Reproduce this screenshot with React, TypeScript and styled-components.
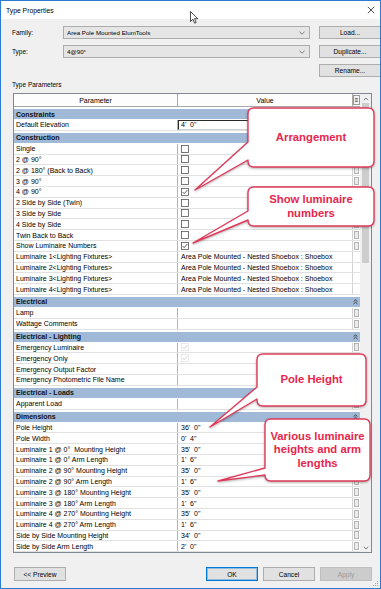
import React from 'react'
import styled, { createGlobalStyle } from 'styled-components'

const GlobalStyle = createGlobalStyle`
  html, body {
    margin: 0;
    padding: 0;
    background: #fff;
  }
  body {
    font-family: "Liberation Sans", Arial, sans-serif;
    font-size: 7px;
    color: #000;
  }
  * {
    box-sizing: border-box;
  }
`

const Window = styled.div`
  position: relative;
  width: 381px;
  height: 589px;
  border: 1px solid #2b7bd3;
  background: #f0f0f0;
  display: flex;
  flex-direction: column;
  overflow: hidden;
`

const TitleBar = styled.div`
  height: 18px;
  flex-shrink: 0;
  background: #fff;
  display: flex;
  align-items: center;
  justify-content: space-between;
  padding: 0 5px 0 5px;
`

const Title = styled.span`
  font-size: 6.8px;
`

const Body = styled.div`
  flex: 1;
  display: flex;
  flex-direction: column;
  padding: 7px 8px 0 11px;
`

const FormGrid = styled.div`
  display: grid;
  grid-template-columns: 42px 247px 62px;
  grid-auto-rows: 13px;
  column-gap: 9px;
  row-gap: 6px;
`

const Label = styled.div`
  font-size: 6.5px;
  display: flex;
  align-items: center;
`

const Combo = styled.div`
  background: #e5e5e5;
  border: 1px solid #acacac;
  display: flex;
  align-items: center;
  justify-content: space-between;
  padding: 0 4px 0 3px;
  font-size: 6.2px;
`

const Button = styled.div<{ $primary?: boolean; $disabled?: boolean }>`
  background: ${(p) => (p.$disabled ? '#cccccc' : '#e1e1e1')};
  border: 1px solid ${(p) => (p.$primary ? '#0078d7' : p.$disabled ? '#bfbfbf' : '#adadad')};
  box-shadow: ${(p) => (p.$primary ? 'inset 0 0 0 1px rgba(0,120,215,0.35)' : 'none')};
  color: ${(p) => (p.$disabled ? '#9a9a9a' : '#000')};
  font-size: 6.6px;
  display: flex;
  align-items: center;
  justify-content: center;
`

const RenameButton = styled(Button)`
  grid-column: 3;
`

const SectionLabel = styled.div`
  margin-top: 4px;
  height: 8px;
  line-height: 8px;
  font-size: 6.5px;
`

const Table = styled.div`
  margin: 4px 0 0 1px;
  height: 460px;
  flex-shrink: 0;
  border: 1px solid #828790;
  background: #fff;
  display: flex;
`

const Grid = styled.div`
  flex: 1;
  overflow: hidden;
  display: flex;
  flex-direction: column;
`

const HeaderRow = styled.div`
  height: 13px;
  flex-shrink: 0;
  display: grid;
  grid-template-columns: 164px 175px 7px;
  border-bottom: 1px solid #a9a9a9;
  background: #fdfdfd;
`

const HeaderCell = styled.div`
  display: flex;
  align-items: center;
  justify-content: center;
  border-right: 1px solid #a9a9a9;
`

const MenuButton = styled.div`
  margin: 1px 0;
  border: 1px solid #9a9a9a;
  background: #f4f4f4;
  font-size: 6px;
  display: flex;
  align-items: center;
  justify-content: center;
  line-height: 1;
`

const Row = styled.div`
  height: 10.8px;
  flex-shrink: 0;
  display: grid;
  grid-template-columns: 164px 175px 7px;
  border-bottom: 1px solid #e1e1e1;
`

const ParamCell = styled.div`
  padding-left: 2px;
  border-right: 1px solid #b4b4b4;
  display: flex;
  align-items: center;
  white-space: pre;
  overflow: hidden;
`

const ValueCell = styled.div<{ $flush?: boolean }>`
  padding-left: ${(p) => (p.$flush ? 0 : 3)}px;
  border-right: 1px solid #d4d4d4;
  display: flex;
  align-items: center;
  white-space: pre;
  overflow: hidden;
`

const EditBox = styled.div`
  flex: 1;
  align-self: stretch;
  border: 1px solid;
  border-color: #2a2a2a #d0d0d0 #d0d0d0 #2a2a2a;
  padding-left: 2px;
  display: flex;
  align-items: center;
  white-space: pre;
`

const SideCell = styled.div`
  display: flex;
  align-items: center;
  justify-content: center;
`

const MiniBox = styled.div`
  width: 5px;
  height: 8px;
  border: 1px solid #b3b3b3;
  background: #ececec;
`

const GroupRow = styled.div`
  height: 13px;
  flex-shrink: 0;
  padding: 2px 0 1px;
  background: #fff;
`

const GroupBand = styled.div`
  height: 10px;
  background: #9fb9d7;
  display: flex;
  align-items: center;
  justify-content: space-between;
  padding: 0 2px 0 2px;
  font-weight: bold;
  color: #111;
`

const ScrollBar = styled.div`
  width: 11px;
  flex-shrink: 0;
  background: #f0f0f0;
  display: flex;
  flex-direction: column;
`

const ScrollArrow = styled.div`
  height: 9px;
  flex-shrink: 0;
  display: flex;
  align-items: center;
  justify-content: center;
`

const ScrollThumb = styled.div`
  height: 160px;
  margin: 0 2px;
  background: #cdcdcd;
`

const ScrollTrack = styled.div`
  flex: 1;
`

const Footer = styled.div`
  margin-top: 14px;
  height: 14px;
  display: flex;
  justify-content: space-between;
  padding-left: 2px;
`

const FooterGroup = styled.div`
  display: flex;
  gap: 5px;
`

const FooterButton = styled(Button)`
  width: 52px;
`

const CalloutWrap = styled.div<{ $x: number; $y: number; $w: number; $h: number }>`
  position: absolute;
  left: ${(p) => p.$x}px;
  top: ${(p) => p.$y}px;
  width: ${(p) => p.$w}px;
  height: ${(p) => p.$h}px;
  display: flex;
  align-items: center;
  justify-content: center;
  text-align: center;
  color: #e8264c;
  font-weight: bold;
  font-size: 11.3px;
  line-height: 13.5px;
`

const CalloutShape = styled.svg`
  position: absolute;
  left: 0;
  top: 0;
  overflow: visible;
  filter: drop-shadow(0.6px 1px 0.8px rgba(0, 0, 0, 0.3));

  path {
    fill: #fff;
    stroke: #e03a5a;
    stroke-width: 1.4;
    stroke-linejoin: round;
  }
`

const CalloutText = styled.span`
  position: relative;
`

const Cursor = styled.svg`
  position: absolute;
  left: 189px;
  top: 10px;
`

const Grip = styled.svg`
  position: absolute;
  right: 1px;
  bottom: 1px;
`

type Param = {
  kind: 'param'
  label: string
  value?: string
  check?: boolean
  checked?: boolean
  disabled?: boolean
  edit?: boolean
  noBox?: boolean
}
type Group = { kind: 'group'; label: string }
type Entry = Param | Group

const g = (label: string): Group => ({ kind: 'group', label })
const p = (label: string, extra: Partial<Param> = {}): Param => ({ kind: 'param', label, ...extra })

const rows: Entry[] = [
  g('Constraints'),
  p('Default Elevation', { value: '4\'  0"', edit: true }),
  g('Construction'),
  p('Single', { check: true }),
  p('2 @ 90°', { check: true }),
  p('2 @ 180° (Back to Back)', { check: true }),
  p('3 @ 90°', { check: true }),
  p('4 @ 90°', { check: true, checked: true }),
  p('2 Side by Side (Twin)', { check: true }),
  p('3 Side by Side', { check: true }),
  p('4 Side by Side', { check: true }),
  p('Twin Back to Back', { check: true }),
  p('Show Luminaire Numbers', { check: true, checked: true }),
  p('Luminaire 1<Lighting Fixtures>', { value: 'Area Pole Mounted - Nested Shoebox : Shoebox', noBox: true }),
  p('Luminaire 2<Lighting Fixtures>', { value: 'Area Pole Mounted - Nested Shoebox : Shoebox', noBox: true }),
  p('Luminaire 3<Lighting Fixtures>', { value: 'Area Pole Mounted - Nested Shoebox : Shoebox', noBox: true }),
  p('Luminaire 4<Lighting Fixtures>', { value: 'Area Pole Mounted - Nested Shoebox : Shoebox', noBox: true }),
  g('Electrical'),
  p('Lamp'),
  p('Wattage Comments'),
  g('Electrical - Lighting'),
  p('Emergency Luminaire', { check: true, checked: true, disabled: true }),
  p('Emergency Only', { check: true, checked: true, disabled: true }),
  p('Emergency Output Factor'),
  p('Emergency Photometric File Name'),
  g('Electrical - Loads'),
  p('Apparent Load'),
  g('Dimensions'),
  p('Pole Height', { value: '36\'  0"' }),
  p('Pole Width', { value: '0\'  4"' }),
  p('Luminaire 1 @ 0°  Mounting Height', { value: '35\'  0"' }),
  p('Luminaire 1 @ 0° Arm Length', { value: '1\'  6"' }),
  p('Luminaire 2 @ 90° Mounting Height', { value: '35\'  0"' }),
  p('Luminaire 2 @ 90° Arm Length', { value: '1\'  6"' }),
  p('Luminaire 3 @ 180° Mounting Height', { value: '35\'  0"' }),
  p('Luminaire 3 @ 180° Arm Length', { value: '1\'  6"' }),
  p('Luminaire 4 @ 270° Mounting Height', { value: '35\'  0"' }),
  p('Luminaire 4 @ 270° Arm Length', { value: '1\'  6"' }),
  p('Side by Side Mounting Height', { value: '34\'  0"' }),
  p('Side by Side Arm Length', { value: '2\'  0"' }),
]

function CloseIcon() {
  return (
    <svg width="8" height="8" viewBox="0 0 8 8">
      <path d="M0.8 0.8 L7.2 7.2 M7.2 0.8 L0.8 7.2" stroke="#222" strokeWidth="0.8" />
    </svg>
  )
}

function ComboChevron() {
  return (
    <svg width="6" height="4" viewBox="0 0 6 4">
      <path d="M0.5 0.8 L3 3.2 L5.5 0.8" stroke="#555" strokeWidth="0.7" fill="none" />
    </svg>
  )
}

function Checkbox({ checked, disabled }: { checked?: boolean; disabled?: boolean }) {
  const line = disabled ? '#c4c4c4' : '#3a3a3a'
  return (
    <svg width="8" height="8" viewBox="0 0 8 8">
      <rect x="0.5" y="0.5" width="7" height="7" fill="#fff" stroke={disabled ? '#e4e4e4' : '#555'} strokeWidth="0.8" />
      {checked && <path d="M1.6 4 L3.2 5.7 L6.4 2" stroke={line} strokeWidth="0.8" fill="none" />}
    </svg>
  )
}

function Collapse() {
  return (
    <svg width="5" height="6" viewBox="0 0 5 6">
      <path d="M0.6 2.6 L2.5 0.8 L4.4 2.6 M0.6 5 L2.5 3.2 L4.4 5" stroke="#222" strokeWidth="0.8" fill="none" />
    </svg>
  )
}

function Arrow({ up }: { up?: boolean }) {
  return (
    <svg width="6" height="4" viewBox="0 0 6 4">
      <path d={up ? 'M0.8 3.2 L3 1 L5.2 3.2' : 'M0.8 0.8 L3 3 L5.2 0.8'} stroke="#606060" strokeWidth="0.8" fill="none" />
    </svg>
  )
}

type CalloutProps = {
  x: number
  y: number
  w: number
  h: number
  y1: number
  y2: number
  tx: number
  ty: number
  children: React.ReactNode
}

function Callout({ x, y, w, h, y1, y2, tx, ty, children }: CalloutProps) {
  const r = 6
  const d = `M${r},0 H${w - r} Q${w},0 ${w},${r} V${h - r} Q${w},${h} ${w - r},${h} H${r} Q0,${h} 0,${h - r} V${y2} L${tx},${ty} L0,${y1} V${r} Q0,0 ${r},0 Z`
  return (
    <CalloutWrap $x={x - 1} $y={y - 1} $w={w} $h={h}>
      <CalloutShape width={w} height={h} viewBox={`0 0 ${w} ${h}`}>
        <path d={d} />
      </CalloutShape>
      <CalloutText>{children}</CalloutText>
    </CalloutWrap>
  )
}

function ParamRow({ row }: { row: Param }) {
  return (
    <Row>
      <ParamCell>{row.label}</ParamCell>
      <ValueCell $flush={row.edit}>
        {row.edit ? (
          <EditBox>{row.value}</EditBox>
        ) : row.check ? (
          <Checkbox checked={row.checked} disabled={row.disabled} />
        ) : (
          row.value
        )}
      </ValueCell>
      <SideCell>{!row.noBox && <MiniBox />}</SideCell>
    </Row>
  )
}

export default function App() {
  return (
    <>
      <GlobalStyle />
      <Window>
        <TitleBar>
          <Title>Type Properties</Title>
          <CloseIcon />
        </TitleBar>
        <Body>
          <FormGrid>
            <Label>Family:</Label>
            <Combo>
              <span>Area Pole Mounted ElumTools</span>
              <ComboChevron />
            </Combo>
            <Button>Load...</Button>
            <Label>Type:</Label>
            <Combo>
              <span>4@90°</span>
              <ComboChevron />
            </Combo>
            <Button>Duplicate...</Button>
            <RenameButton>Rename...</RenameButton>
          </FormGrid>
          <SectionLabel>Type Parameters</SectionLabel>
          <Table>
            <Grid>
              <HeaderRow>
                <HeaderCell>Parameter</HeaderCell>
                <HeaderCell>Value</HeaderCell>
                <MenuButton>≡</MenuButton>
              </HeaderRow>
              {rows.map((row, i) =>
                row.kind === 'group' ? (
                  <GroupRow key={i}>
                    <GroupBand>
                      <span>{row.label}</span>
                      <Collapse />
                    </GroupBand>
                  </GroupRow>
                ) : (
                  <ParamRow key={i} row={row} />
                )
              )}
            </Grid>
            <ScrollBar>
              <ScrollArrow>
                <Arrow up />
              </ScrollArrow>
              <ScrollThumb />
              <ScrollTrack />
              <ScrollArrow>
                <Arrow />
              </ScrollArrow>
            </ScrollBar>
          </Table>
          <Footer>
            <FooterButton>&lt;&lt; Preview</FooterButton>
            <FooterGroup>
              <FooterButton $primary>OK</FooterButton>
              <FooterButton>Cancel</FooterButton>
              <FooterButton $disabled>Apply</FooterButton>
            </FooterGroup>
          </Footer>
        </Body>

        <Cursor width="9" height="13" viewBox="0 0 9 13">
          <path d="M0.5 0.5 L0.5 10.5 L2.9 8.3 L4.6 12.2 L6.2 11.5 L4.5 7.7 L7.8 7.7 Z" fill="#fff" stroke="#000" strokeWidth="0.7" />
        </Cursor>

        <Callout x={248} y={108} w={126} h={59} y1={34} y2={52} tx={-53} ty={82}>
          Arrangement
        </Callout>
        <Callout x={248} y={187} w={126} h={39} y1={24} y2={33} tx={-55} ty={56}>
          Show luminaire
          <br />
          numbers
        </Callout>
        <Callout x={257} y={354} w={109} h={52} y1={33} y2={45} tx={-47} ty={73}>
          Pole Height
        </Callout>
        <Callout x={265} y={419} w={105} h={62} y1={49} y2={56} tx={-47} ty={62}>
          Various luminaire
          <br />
          heights and arm
          <br />
          lengths
        </Callout>

        <Grip width="6" height="6" viewBox="0 0 6 6">
          <rect x="4" y="0" width="1" height="1" fill="#a0a0a0" />
          <rect x="2" y="2" width="1" height="1" fill="#a0a0a0" />
          <rect x="4" y="2" width="1" height="1" fill="#a0a0a0" />
          <rect x="0" y="4" width="1" height="1" fill="#a0a0a0" />
          <rect x="2" y="4" width="1" height="1" fill="#a0a0a0" />
          <rect x="4" y="4" width="1" height="1" fill="#a0a0a0" />
        </Grip>
      </Window>
    </>
  )
}
